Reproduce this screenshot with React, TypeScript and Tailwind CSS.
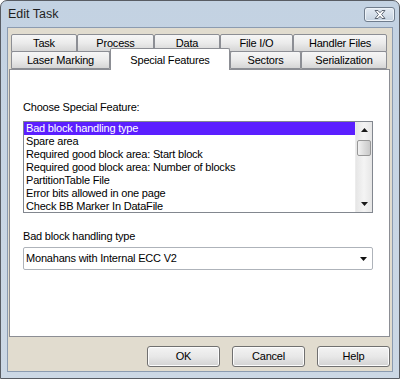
import React from "react"

const font = { fontFamily: '"Liberation Sans", Arial, sans-serif' }

const row1 = [
  { label: "Task", w: "w-[66px]" },
  { label: "Process", w: "w-[77px]" },
  { label: "Data", w: "w-[66px]" },
  { label: "File I/O", w: "w-[73px]" },
  { label: "Handler Files", w: "w-[94px]" },
]

const features = [
  "Bad block handling type",
  "Spare area",
  "Required good block area: Start block",
  "Required good block area: Number of blocks",
  "PartitionTable File",
  "Error bits allowed in one page",
  "Check BB Marker In DataFile",
]

function Tab({ label, w }: { label: string; w: string }) {
  return (
    <div
      className={`${w} h-full flex items-center justify-center border border-[#8c8e94] rounded-t-[2px] bg-linear-to-b from-[#f6f6f6] via-[#ebebeb] to-[#d6d6d6] text-black`}
    >
      {label}
    </div>
  )
}

function Button({ children }: { children: React.ReactNode }) {
  return (
    <button className="w-[73px] h-[21px] flex items-center justify-center border border-[#707070] rounded-[3px] bg-linear-to-b from-[#f3f3f3] via-[#e8e8e8] to-[#d2d2d2] text-black shadow-[inset_0_0_0_1px_#fcfcfc]">
      {children}
    </button>
  )
}

function ScrollArrow({ down }: { down?: boolean }) {
  return (
    <div className="h-[16px] flex items-center justify-center">
      <svg width="7" height="4" viewBox="0 0 7 4">
        {down ? <path d="M0 0h7L3.5 4z" fill="#1a1a1a" /> : <path d="M0 4h7L3.5 0z" fill="#1a1a1a" />}
      </svg>
    </div>
  )
}

export default function App() {
  return (
    <div
      className="w-[400px] h-[379px] flex flex-col border border-[#585c63] rounded-t-[7px] bg-linear-to-b from-[#c3d2e2] to-[#ccd8e5] text-[11px] tracking-[-0.2px] overflow-hidden"
      style={font}
    >
      {/* title bar */}
      <div className="h-[26px] flex items-start justify-between pl-[7px] pr-[4px] shrink-0">
        <span className="mt-[6px] text-[12.5px] leading-[15px] tracking-normal text-[#1f1f1f]">Edit Task</span>
        <div className="mt-[6px] w-[31px] h-[15px] flex items-center justify-center border border-[#6f7c8c] rounded-[3px] bg-linear-to-b from-[#e4ebf3] to-[#c5d2e0] shadow-[inset_0_0_0_1px_#eef3f8]">
          <svg width="12" height="9" viewBox="0 0 12 9">
            <path
              d="M1 0.5h3l2 2.2 2-2.2h3L7.6 4.5 11 8.5H8L6 6.3 4 8.5H1l3.4-4z"
              fill="#ffffff"
              stroke="#5d6673"
              strokeWidth="1"
              strokeLinejoin="round"
            />
          </svg>
        </div>
      </div>

      {/* client area */}
      <div className="flex-1 mx-[6px] mb-[6px] border border-[#8b9bb0] bg-[#e1dccf] flex flex-col">
        {/* tabs */}
        <div className="ml-[3px] mt-[6px] flex flex-col">
          <div className="h-[18px] flex">
            {row1.map((t) => (
              <Tab key={t.label} {...t} />
            ))}
          </div>
          <div className="h-[18px] flex items-end -mt-px">
            <Tab label="Laser Marking" w="w-[99px]" />
            <div className="relative z-10 w-[120px] h-[22px] -mb-px flex items-start justify-center pt-[3px] border border-b-0 border-[#8c8e94] rounded-t-[2px] bg-white text-black">
              Special Features
            </div>
            <Tab label="Sectors" w="w-[71px]" />
            <Tab label="Serialization" w="w-[86px]" />
          </div>
        </div>

        {/* tab page */}
        <div className="ml-px w-[381px] h-[268px] border border-[#8c8e94] bg-white pl-[13px] pt-[31px] flex flex-col">
          <div className="leading-[13px] text-black">Choose Special Feature:</div>
          <div className="mt-[7px] w-[350px] h-[92px] border border-[#82878f] flex">
            <div className="flex-1 flex flex-col">
              {features.map((f, i) => (
                <div
                  key={f}
                  className={`h-[13px] leading-[13px] pl-[2px] whitespace-nowrap ${
                    i === 0 ? "bg-[#5b1fff] text-white" : "text-black"
                  }`}
                >
                  {f}
                </div>
              ))}
            </div>
            <div className="w-[17px] flex flex-col bg-linear-to-r from-[#e6e6e6] via-[#f4f4f4] to-[#e6e6e6] border-l border-[#ececec]">
              <ScrollArrow />
              <div className="mx-[1px] mt-[2px] h-[16px] rounded-[2px] border border-[#979797] bg-linear-to-r from-[#f2f2f2] via-[#dcdcdc] to-[#c9c9c9]" />
              <div className="flex-1" />
              <ScrollArrow down />
            </div>
          </div>

          <div className="mt-[17px] leading-[13px] text-black">Bad block handling type</div>
          <div className="mt-[4px] w-[350px] h-[23px] border border-[#aeb3ba] rounded-[2px] bg-white flex items-center justify-between pl-[2px] pr-[5px] text-black">
            <span>Monahans with Internal ECC V2</span>
            <svg width="7" height="4" viewBox="0 0 7 4">
              <path d="M0 0h7L3.5 4z" fill="#111" />
            </svg>
          </div>
        </div>

        {/* buttons */}
        <div className="mt-[9px] flex justify-end gap-[12px] pr-[2px]">
          <Button>OK</Button>
          <Button>Cancel</Button>
          <Button>Help</Button>
        </div>
      </div>
    </div>
  )
}
